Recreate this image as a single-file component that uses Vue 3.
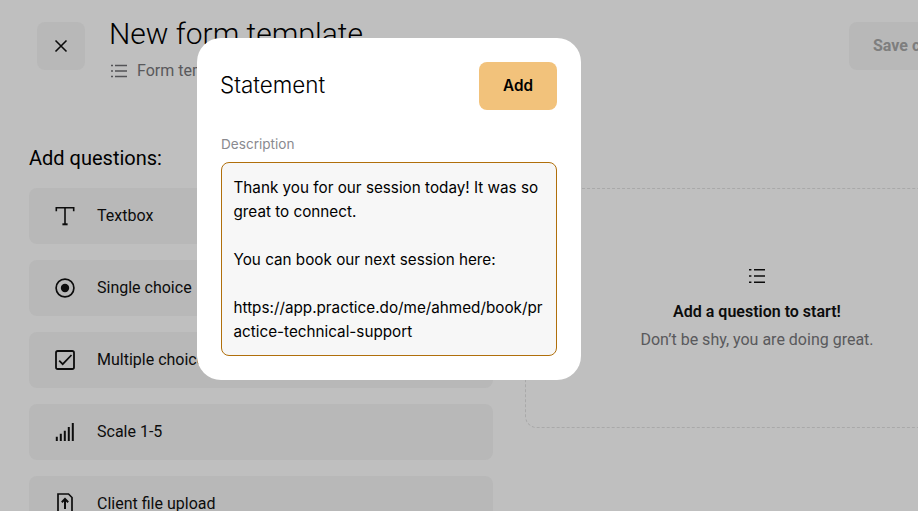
<script setup>
const items = [
  { label: 'Textbox', icon: 'text' },
  { label: 'Single choice', icon: 'radio' },
  { label: 'Multiple choice', icon: 'check' },
  { label: 'Scale 1-5', icon: 'scale' },
  { label: 'Client file upload', icon: 'upload' },
]
const body = `Thank you for our session today! It was so great to connect.

You can book our next session here:

https://app.practice.do/me/ahmed/book/practice-technical-support`
</script>

<template>
  <div class="viewport">
    <div class="page">
      <header class="header">
        <button class="close" aria-label="Close">
          <svg width="14" height="14" viewBox="0 0 14 14" fill="none" stroke="#111" stroke-width="1.6"><path d="M1.5 1.5l11 11M12.5 1.5l-11 11"/></svg>
        </button>
        <div class="heading">
          <h1>New form template</h1>
          <div class="sub">
            <svg width="16" height="14" viewBox="0 0 16 14" fill="none" stroke="#6f6f73" stroke-width="1.3"><path d="M4 1.500h12M4 7h12M4 12.500h12M0 1.500h2M0 7h2M0 12.500h2"/></svg>
            <span>Form template</span>
          </div>
        </div>
        <button class="save">Save changes</button>
      </header>
      <main class="columns">
        <section class="left">
          <h2>Add questions:</h2>
          <div class="list">
            <div v-for="item in items" :key="item.label" class="item">
              <span class="icon">
                <svg v-if="item.icon === 'text'" width="24" height="24" viewBox="0 0 24 24" fill="none" stroke="#111" stroke-width="1.6"><path d="M3.300 7.200V3.800h17.400v3.400M12 3.800V20" /><path d="M9.400 20.300h5.200" stroke-width="2"/></svg>
                <svg v-else-if="item.icon === 'radio'" width="24" height="24" viewBox="0 0 24 24" fill="none"><circle cx="12" cy="12" r="8.900" stroke="#111" stroke-width="1.700"/><circle cx="12" cy="12" r="4.200" fill="#111"/></svg>
                <svg v-else-if="item.icon === 'check'" width="24" height="24" viewBox="0 0 24 24" fill="none" stroke="#111"><rect x="3" y="3" width="18" height="18" rx="1.800" stroke-width="1.800"/><path d="M6.200 12.700l3.500 3.500 8.800-9.200" stroke-width="1.700"/></svg>
                <svg v-else-if="item.icon === 'scale'" width="24" height="24" viewBox="0 0 24 24" fill="none" stroke="#111" stroke-width="2"><path d="M3.800 21v-4.300M7.800 21v-7.300M11.800 21V10.700M15.800 21V7M19.800 21V3"/></svg>
                <svg v-else width="24" height="24" viewBox="0 0 24 24" fill="none" stroke="#111"><path d="M5 22.500V2h10.500L19 5.500v17z" stroke-width="1.700"/><path d="M12 17v-10M8.800 10.300L12 7l3.200 3.300" stroke-width="2"/></svg>
              </span>
              <span class="item-label">{{ item.label }}</span>
            </div>
          </div>
        </section>
        <section class="empty">
          <svg width="16" height="14" viewBox="0 0 16 14" fill="none" stroke="#111" stroke-width="1.5"><path d="M5 .8h11M5 7h11M5 13.200h11M0 .8h2.400M0 7h2.400M0 13.200h2.400"/></svg>
          <strong>Add a question to start!</strong>
          <span>Don’t be shy, you are doing great.</span>
        </section>
      </main>
    </div>
    <div class="backdrop"></div>
    <div class="modal">
      <div class="modal-head">
        <h3>Statement</h3>
        <button class="add">Add</button>
      </div>
      <div class="label">Description</div>
      <div class="field">{{ body }}</div>
    </div>
  </div>
</template>

<style>
html, body { margin: 0; overflow: hidden; }
</style>

<style scoped>
.viewport {
  position: relative;
  width: 918px;
  height: 511px;
  overflow: hidden;
  background: #fff;
  font-family: Roboto, sans-serif;
  color: #111;
}
.page { width: 1018px; padding: 22px 29px 0; box-sizing: border-box; }
.header { display: flex; align-items: flex-start; padding-left: 8px; }
button { border: 0; font: inherit; padding: 0; }
.close {
  width: 48px; height: 48px; border-radius: 8px; background: #f6f6f6;
  display: flex; align-items: center; justify-content: center; flex: none;
}
.heading { margin-left: 24px; flex: 1; margin-top: -6px; }
h1 { margin: 0; font: 300 30px/36px Roboto, sans-serif; color: #000; }
.sub {
  display: flex; align-items: center; gap: 10px; margin-top: 9px; margin-left: 2px;
  font: 400 16px/20px Roboto, sans-serif; color: #77777b;
}
.save {
  width: 140px; height: 48px; border-radius: 8px; background: #f6f6f6; text-align: left; padding-left: 24px;
  color: #a8a8a8; font: 700 16px/48px Roboto, sans-serif; flex: none;
}
.columns { display: flex; gap: 32px; margin-top: 65px; }
.left { width: 464px; flex: none; }
h2 { margin: 0 0 18px; font: 400 20px/24px Roboto, sans-serif; color: #000; }
.list { display: flex; flex-direction: column; gap: 16px; }
.item {
  height: 56px; border-radius: 8px; background: #f6f6f6; display: flex; align-items: center;
  padding-left: 24px; font-size: 16px; gap: 20px; color: #111;
}
.item-label { margin-bottom: 2px; }
.icon { width: 24px; height: 24px; flex: none; }
.icon svg { display: block; }
.empty {
  margin-top: 42px; width: 464px; height: 240px; box-sizing: border-box; flex: none;
  border: 1px dashed #e2e2e2; border-radius: 12px;
  display: flex; flex-direction: column; align-items: center; padding-top: 80px;
}
.empty strong { margin-top: 17px; font-size: 16px; line-height: 24px; font-weight: 600; }
.empty span { margin-top: 4px; font-size: 16px; line-height: 24px; color: #77777b; }
.backdrop { position: absolute; inset: 0; background: rgba(0, 0, 0, 0.25); }
.modal {
  position: absolute; left: 197px; top: 38px; width: 384px; height: 342px; box-sizing: border-box;
  background: #fff; border-radius: 24px; padding: 24px;
  font-family: Inter, sans-serif;
}
.modal-head { display: flex; justify-content: space-between; align-items: center; }
h3 { margin: 0 0 2px -1px; font: 300 22.400px/32px Inter, sans-serif; color: #000; }
.add {
  width: 78px; height: 48px; border-radius: 8px; background: #f2c27b;
  font: 600 15.250px/48px Inter, sans-serif; color: #000;
}
.label { margin-top: 24px; font-size: 13.600px; line-height: 20px; color: #8a8a8f; }
.field {
  margin-top: 8px; height: 194px; box-sizing: border-box; border: 1px solid #b06f0b; border-radius: 8px;
  background: #f7f7f7; padding: 13px 11.500px 11px; font-size: 15.250px; line-height: 24px; color: #000;
  white-space: pre-wrap; overflow-wrap: anywhere;
}
</style>
